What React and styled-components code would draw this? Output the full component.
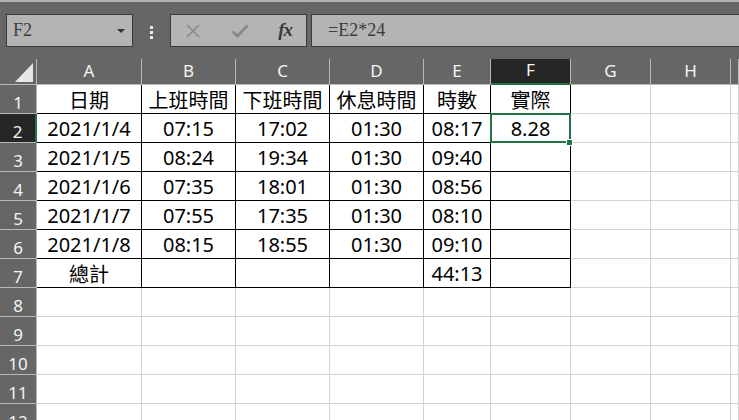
import React from 'react';
import styled, { createGlobalStyle } from 'styled-components';

const Global = createGlobalStyle`
  html, body { margin: 0; padding: 0; background: #666; }
  * { box-sizing: border-box; }
`;

const Page = styled.div`
  width: 739px;
  height: 420px;
  overflow: hidden;
  background: #666;
  display: flex;
  flex-direction: column;
`;

const Toolbar = styled.div`
  height: 59px;
  flex: none;
  border-top: 2px solid #b4b4b4;
  padding: 12px 0 0 6px;
  display: flex;
  align-items: flex-start;
`;

const Box = styled.div`
  height: 33px;
  background: #b4b4b4;
  border: 1px solid #3a3a3a;
  display: flex;
  align-items: center;
`;

const NameBox = styled(Box)`
  width: 127px;
  padding: 0 7px 0 6px;
  justify-content: space-between;
  font-family: "Liberation Serif", serif;
  font-size: 18px;
  color: #3c3c3c;
`;

const Caret = styled.span`
  width: 0;
  height: 0;
  border-left: 4px solid transparent;
  border-right: 4px solid transparent;
  border-top: 4px solid #333;
  margin-top: 1px;
`;

const Grip = styled.div`
  width: 3px;
  margin: 12px 17px 0 17px;
  display: flex;
  flex-direction: column;
  gap: 2px;
`;

const GripDot = styled.span`
  width: 3px;
  height: 3px;
  background: #ececec;
`;

const ButtonGroup = styled(Box)`
  width: 137px;
  padding: 0 14px 0 14px;
  justify-content: space-between;
`;

const Fx = styled.span`
  font-family: "Liberation Serif", serif;
  font-style: italic;
  font-weight: bold;
  font-size: 19px;
  color: #3a3a3a;
  letter-spacing: -1px;
  margin-top: -2px;
`;

const FormulaBar = styled(Box)`
  flex: 1;
  margin-left: 4px;
  border-right: none;
  padding-left: 16px;
  font-family: "Liberation Serif", serif;
  font-size: 18px;
  color: #3c3c3c;
`;

const Sheet = styled.div`
  flex: 1;
  display: grid;
  grid-template-columns: 37px 105px 94px 94px 94px 67px 80px 80px 80px 1fr;
  grid-template-rows: 26px repeat(12, 29px);
  overflow: hidden;
`;

const Corner = styled.div`
  border-right: 1px solid #b8b8b8;
  border-bottom: 1px solid #b8b8b8;
  position: relative;
`;

const ColHead = styled.div`
  background: ${p => (p.$active ? '#262626' : '#666')};
  border-right: 1px solid #b8b8b8;
  border-bottom: ${p => (p.$active ? '2px solid #217346' : '1px solid #b8b8b8')};
  color: #f4f4f4;
  font-family: "Noto Sans", "Segoe UI", sans-serif;
  font-size: 17px;
  display: flex;
  justify-content: center;
  align-items: center;
  padding-bottom: 3px;
`;

const RowHead = styled.div`
  background: ${p => (p.$active ? '#262626' : '#666')};
  border-right: ${p => (p.$active ? '2px solid #217346' : '1px solid #b8b8b8')};
  border-bottom: 1px solid #b8b8b8;
  color: #f4f4f4;
  font-family: "Noto Sans", "Segoe UI", sans-serif;
  font-size: 17px;
  display: flex;
  justify-content: center;
  align-items: center;
  padding-top: 6px;
`;

const Cell = styled.div`
  position: relative;
  background: #fff;
  border-right: 1px solid ${p => (p.$boxed ? '#000' : '#d4d4d4')};
  border-bottom: 1px solid ${p => (p.$boxed ? '#000' : '#d4d4d4')};
  display: flex;
  justify-content: center;
  align-items: center;
  font-family: "Noto Sans", "Noto Sans CJK TC", sans-serif;
  font-size: 20px;
  color: #000;
  white-space: nowrap;
`;

const Selection = styled.div`
  position: absolute;
  top: -1px;
  left: -1px;
  right: -1px;
  bottom: -1px;
  border: 2px solid #217346;
  z-index: 2;
`;

const Handle = styled.div`
  position: absolute;
  right: -2px;
  bottom: -3px;
  width: 5px;
  height: 5px;
  background: #217346;
  box-shadow: 0 0 0 1px #fff;
  z-index: 3;
`;

const columns = ['A', 'B', 'C', 'D', 'E', 'F', 'G', 'H', 'I'];

const data = [
  ['日期', '上班時間', '下班時間', '休息時間', '時數', '實際'],
  ['2021/1/4', '07:15', '17:02', '01:30', '08:17', '8.28'],
  ['2021/1/5', '08:24', '19:34', '01:30', '09:40', ''],
  ['2021/1/6', '07:35', '18:01', '01:30', '08:56', ''],
  ['2021/1/7', '07:55', '17:35', '01:30', '08:10', ''],
  ['2021/1/8', '08:15', '18:55', '01:30', '09:10', ''],
  ['總計', '', '', '', '44:13', ''],
];

export default function App() {
  const rows = [];
  for (let r = 1; r <= 12; r++) {
    rows.push(
      <RowHead key={`rh${r}`} $active={r === 2}>{r}</RowHead>
    );
    columns.forEach((c, ci) => {
      const inTable = r <= 7 && ci <= 5;
      const value = inTable ? data[r - 1][ci] : '';
      const selected = r === 2 && c === 'F';
      rows.push(
        <Cell key={`${c}${r}`} $boxed={inTable}>
          {value}
          {selected && (
            <>
              <Selection />
              <Handle />
            </>
          )}
        </Cell>
      );
    });
  }

  return (
    <Page>
      <Global />
      <Toolbar>
        <NameBox>
          <span>F2</span>
          <Caret />
        </NameBox>
        <Grip>
          <GripDot />
          <GripDot />
          <GripDot />
        </Grip>
        <ButtonGroup>
          <svg width="16" height="16" viewBox="0 0 16 16">
            <path d="M2 2 L14 14 M14 2 L2 14" stroke="#8a8a8a" strokeWidth="1.6" fill="none" />
          </svg>
          <svg width="18" height="16" viewBox="0 0 18 16">
            <path d="M1.5 8.5 L6.5 13 L16.5 2.5" stroke="#8a8a8a" strokeWidth="3" fill="none" />
          </svg>
          <Fx>fx</Fx>
        </ButtonGroup>
        <FormulaBar>=E2*24</FormulaBar>
      </Toolbar>
      <Sheet>
        <Corner>
          <svg width="36" height="25" viewBox="0 0 36 25" style={{ display: 'block' }}>
            <polygon points="15,23 33,23 33,4" fill="#e6e6e6" />
          </svg>
        </Corner>
        {columns.map(c => (
          <ColHead key={c} $active={c === 'F'}>{c === 'I' ? '' : c}</ColHead>
        ))}
        {rows}
      </Sheet>
    </Page>
  );
}
